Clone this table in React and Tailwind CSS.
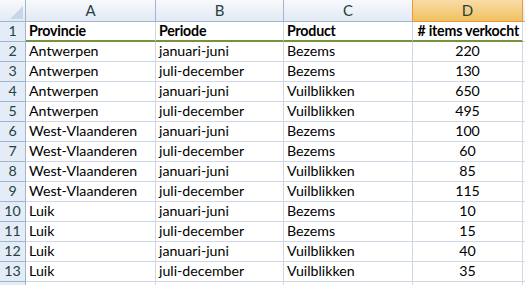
import React from 'react';

const rows = [
  ['Antwerpen', 'januari-juni', 'Bezems', 220],
  ['Antwerpen', 'juli-december', 'Bezems', 130],
  ['Antwerpen', 'januari-juni', 'Vuilblikken', 650],
  ['Antwerpen', 'juli-december', 'Vuilblikken', 495],
  ['West-Vlaanderen', 'januari-juni', 'Bezems', 100],
  ['West-Vlaanderen', 'juli-december', 'Bezems', 60],
  ['West-Vlaanderen', 'januari-juni', 'Vuilblikken', 85],
  ['West-Vlaanderen', 'juli-december', 'Vuilblikken', 115],
  ['Luik', 'januari-juni', 'Bezems', 10],
  ['Luik', 'juli-december', 'Bezems', 15],
  ['Luik', 'januari-juni', 'Vuilblikken', 40],
  ['Luik', 'juli-december', 'Vuilblikken', 35],
];

const cols = 'grid grid-cols-[26px_130px_128px_129px_110px_1fr]';
const colHead = 'h-[22px] flex items-center justify-center border-r border-b border-[#9eb6ce] bg-gradient-to-b from-[#f7f9fc] to-[#e3eaf4] text-[#27413e] text-[15px]';
const rowHead = 'flex items-center justify-center border-r border-b border-[#9eb6ce] bg-[#e4ecf7] text-[#27413e]';
const cell = 'flex items-center px-[3px] border-r border-b border-[#d0d7e5] whitespace-nowrap overflow-hidden';
const head = ' font-bold tracking-[-0.2px] border-b-2 border-b-[#76923c]';

export default function App() {
  return (
    <div className="w-[525px] h-[285px] overflow-hidden bg-white text-[14.2px] leading-none text-black" style={{ fontFamily: 'Lato, "Open Sans", sans-serif' }}>
      <div className={cols}>
        <div className={colHead + ' relative'}>
          <svg className="absolute right-[2px] bottom-[2px]" width="13" height="13" viewBox="0 0 13 13">
            <polygon points="13,0 13,13 0,13" fill="#c9d6e8" />
          </svg>
        </div>
        <div className={colHead}>A</div>
        <div className={colHead}>B</div>
        <div className={colHead}>C</div>
        <div className="h-[22px] flex items-center justify-center border-r border-b border-[#f29536] border-l border-l-[#f29536] -ml-px bg-gradient-to-b from-[#f9dca6] to-[#f1c15f] text-[#27413e] text-[15px]">D</div>
        <div className={colHead + ' border-r-0'}></div>
      </div>

      <div className={cols + ' h-[20px]'}>
        <div className={rowHead}>1</div>
        <div className={cell + head}>Provincie</div>
        <div className={cell + head}>Periode</div>
        <div className={cell + head}>Product</div>
        <div className={cell + head + ' justify-end'}># items verkocht</div>
        <div className={cell + ' border-r-0'}></div>
      </div>

      {rows.map((r, i) => (
        <div key={i} className={cols + ' h-[20px]'}>
          <div className={rowHead}>{i + 2}</div>
          <div className={cell}>{r[0]}</div>
          <div className={cell}>{r[1]}</div>
          <div className={cell}>{r[2]}</div>
          <div className={cell + ' justify-center'}>{r[3]}</div>
          <div className={cell + ' border-r-0'}></div>
        </div>
      ))}

      <div className={cols + ' h-[20px]'}>
        <div className={rowHead}></div>
        <div className={cell}></div>
        <div className={cell}></div>
        <div className={cell}></div>
        <div className={cell}></div>
        <div className={cell + ' border-r-0'}></div>
      </div>
    </div>
  );
}
